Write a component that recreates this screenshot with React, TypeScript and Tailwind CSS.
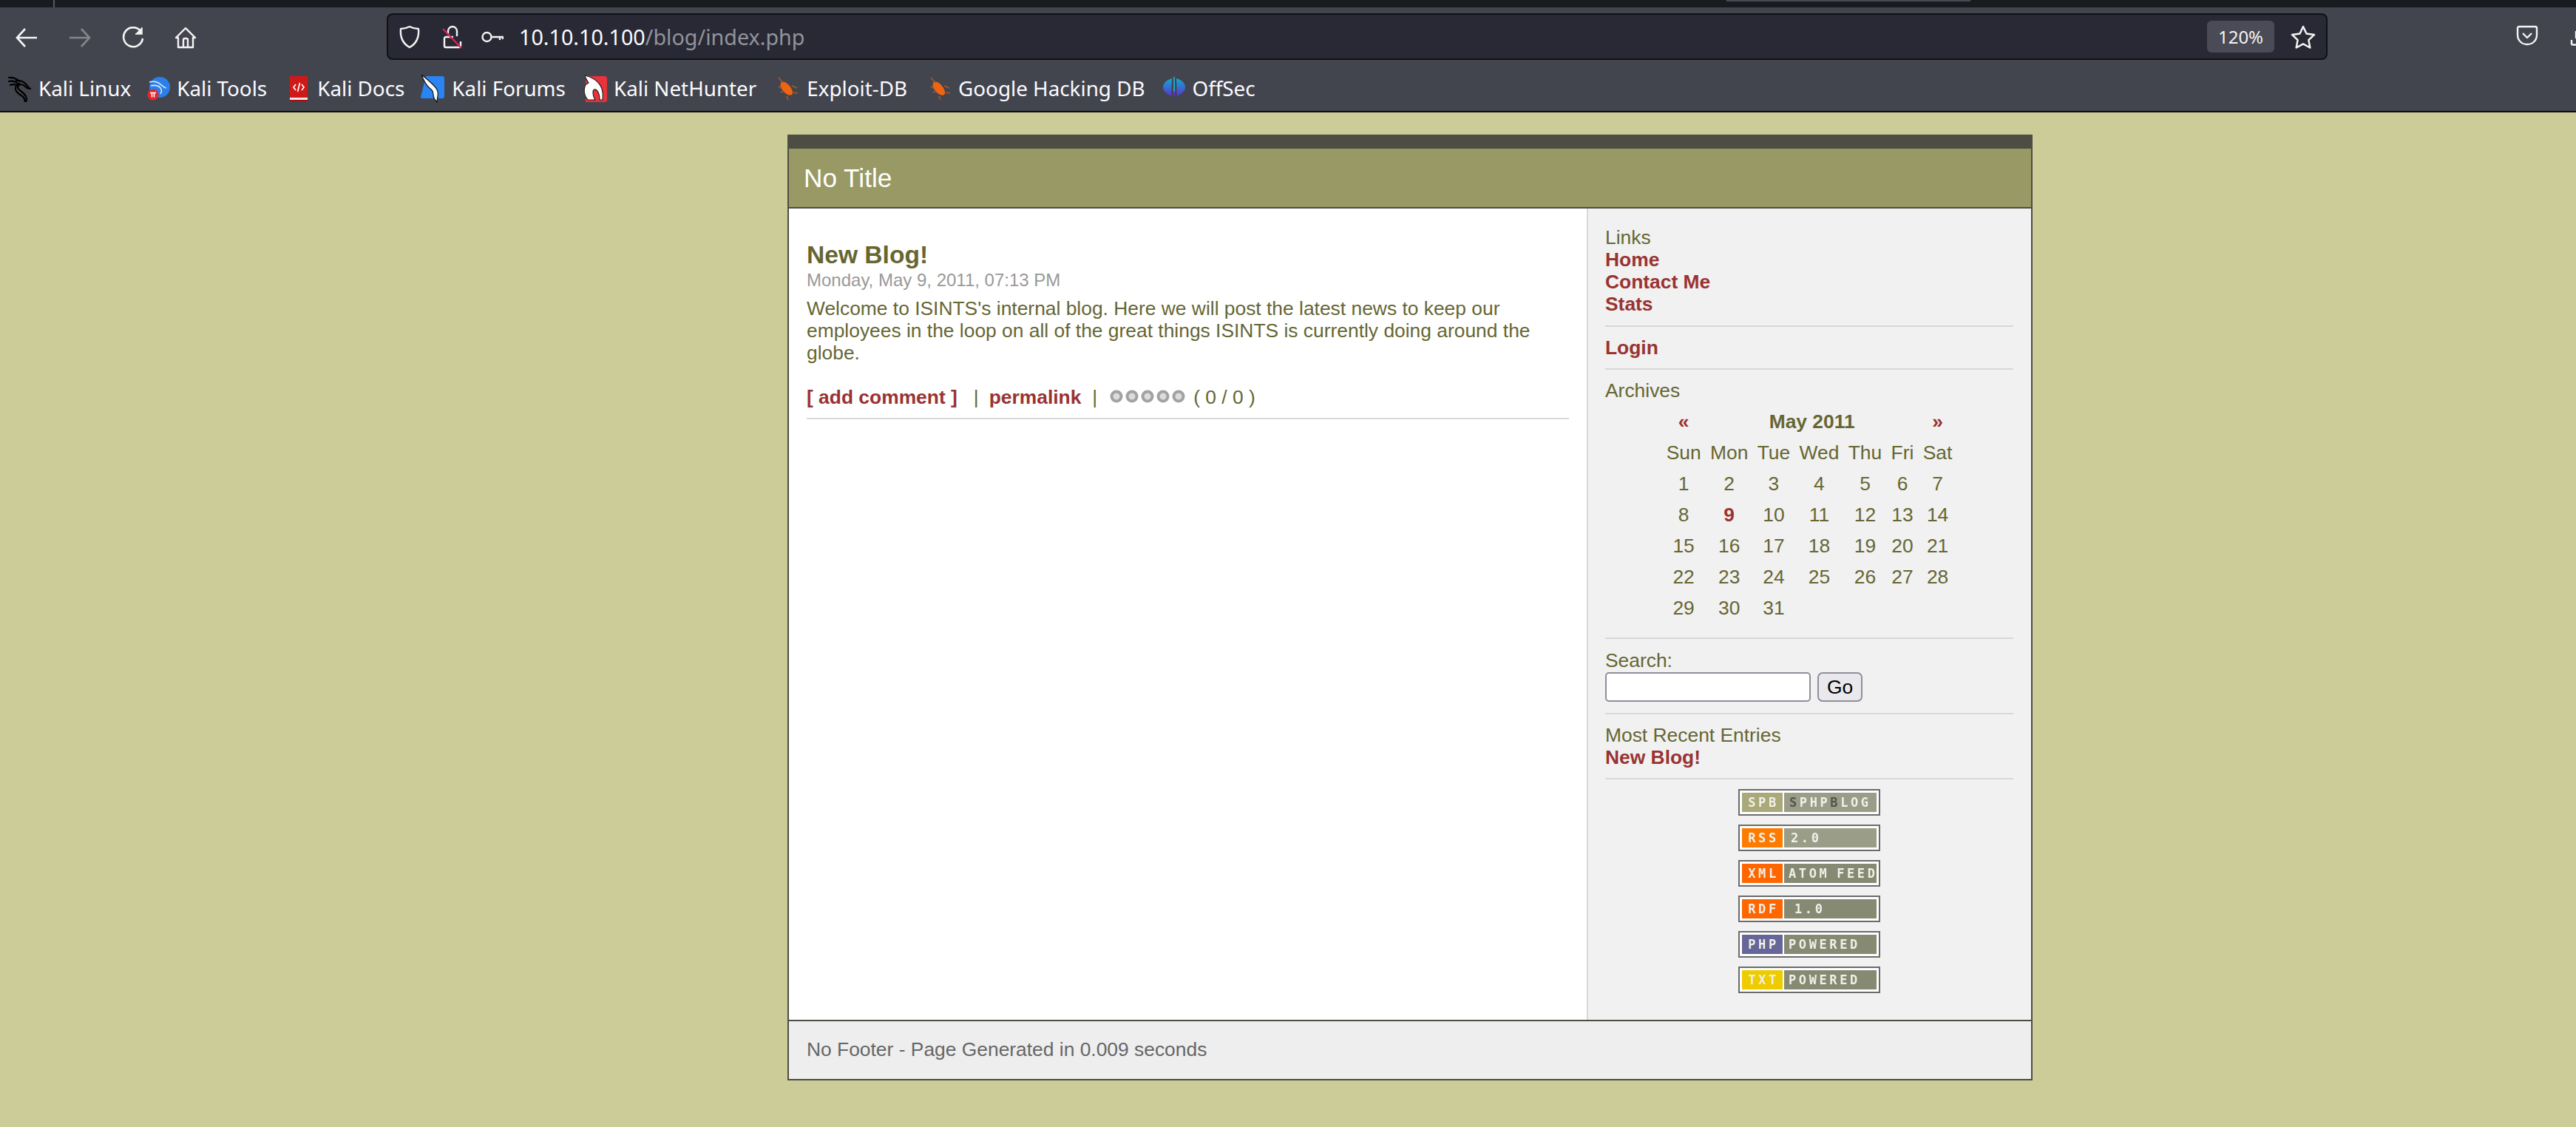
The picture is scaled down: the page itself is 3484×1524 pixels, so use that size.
import React from 'react';

const DAYS = ['Sun', 'Mon', 'Tue', 'Wed', 'Thu', 'Fri', 'Sat'];
const WEEKS = [
    ['1', '2', '3', '4', '5', '6', '7'],
    ['8', '9', '10', '11', '12', '13', '14'],
    ['15', '16', '17', '18', '19', '20', '21'],
    ['22', '23', '24', '25', '26', '27', '28'],
    ['29', '30', '31', '', '', '', ''],
];

const KaliDragon = ({ color = '#000' }: { color?: string }) => (
    <svg width="32" height="36" viewBox="0 0 32 36" fill="none" stroke={color} strokeWidth="2.2" strokeLinecap="round" strokeLinejoin="round">
        <path d="M1 3c6-1 10 1 14 5 M1 8c5-1 9 0 12 3 M3 13c3-1 6-1 8 0" />
        <path d="M11 7c6-1 11 2 14 6 2 2 3 4 5 5-3 0-5-1-7-3-3-3-7-4-9-1-2 2 0 5 3 7 4 3 8 6 8 11 0 2-1 4-2 6 0-4-1-8-4-10-4-3-9-5-9-10 0-3 2-6 5-7" />
    </svg>
);

const favicons: Record<string, React.ReactNode> = {
    linux: <KaliDragon />,
    tools: (
        <svg width="32" height="34" viewBox="0 0 32 34" fill="none">
            <circle cx="17" cy="15" r="14" fill="#2a7fea" />
            <path d="M3 8c6-2 12 0 15 3 3 2 5 5 8 5M5 13c4-1 8-1 11 1 3 2 5 6 2 10" stroke="#dbe9f7" strokeWidth="1.6" />
            <circle cx="8" cy="25" r="7.5" fill="#e8262a" />
            <path d="M4 22.5h8M6.5 22.5v6M9.5 22.5v6" stroke="#fff" strokeWidth="1.6" />
        </svg>
    ),
    docs: (
        <svg width="26" height="34" viewBox="0 0 26 34" fill="none">
            <rect x="1" y="0" width="24" height="29" fill="#d01818" />
            <rect x="1" y="29" width="24" height="3" fill="#e8e8e8" />
            <rect x="1" y="32" width="24" height="2" fill="#a01010" />
            <path d="M9 11l-3 4 3 4M17 11l3 4-3 4M14.5 9l-3 12" stroke="#fff" strokeWidth="1.7" />
        </svg>
    ),
    forums: (
        <svg width="34" height="38" viewBox="0 0 34 38" fill="none">
            <path d="M8 2h22a3 3 0 0 1 3 3v24a3 3 0 0 1-3 3H3a2 2 0 0 1-2-2z" fill="#2a84f2" />
            <path d="M2 0c5 4 10 8 14 12 4 4 7 6 8 11 1 5-1 9-1 14-3-3-5-6-5-10 0-4-1-6-4-8C9 15 5 8 2 0z" fill="#fff" stroke="#111" strokeWidth="1.2" />
        </svg>
    ),
    nethunter: (
        <svg width="32" height="36" viewBox="0 0 32 36" fill="none">
            <path d="M8 1h21a3 3 0 0 1 3 3v29a3 3 0 0 1-3 3H3V8z" fill="#e8323c" />
            <path d="M2 0c8 2 15 6 19 11 4 4 6 11 5 22h-4c0-6-1-10-4-13-2-2-5-1-5 2 0 4 1 8 3 11H6C2 29 0 22 2 15c1-3 3-4 5-5-2-3-4-6-5-10z" fill="#fff" stroke="#222" strokeWidth="1.2" />
        </svg>
    ),
    exploit: (
        <svg width="30" height="34" viewBox="0 0 30 34" fill="none">
            <path d="M7 8c4-2 9 2 13 8 2 4 3 7 1 9-3 2-7 0-11-4C6 17 4 11 7 8z" fill="#ee6410" />
            <path d="M3 2l6 7M21 13l7 3M23 22l6 1M3 14l4 2M6 22l4-2M14 27l2 5" stroke="#a8582c" strokeWidth="1.6" />
        </svg>
    ),
    offsec: (
        <svg width="30" height="32" viewBox="0 0 30 46" fill="none" preserveAspectRatio="none">
            <defs>
                <linearGradient id="offsecFill" x1="0" y1="0" x2="0" y2="1">
                    <stop offset="0" stopColor="#12a9d0" />
                    <stop offset="1" stopColor="#5a35cf" />
                </linearGradient>
            </defs>
            <path d="M12 3C4 6 0 14 0 20c0 7 5 13 11 17z" fill="url(#offsecFill)" />
            <path d="M18 3c8 3 12 11 12 17 0 7-5 13-11 17z" fill="url(#offsecFill)" />
            <path d="M15 0v30" stroke="#1aa7cc" strokeWidth="2" />
            <path d="M13 28h4l-2 14z" fill="#5a2fd0" />
        </svg>
    ),
};

const BOOKMARKS = [
    { icon: 'linux', label: 'Kali Linux', iconBox: 'w-[52px] pl-[11px]', mr: 'mr-[22px]' },
    { icon: 'tools', label: 'Kali Tools', iconBox: 'w-[40px]', mr: 'mr-[30px]' },
    { icon: 'docs', label: 'Kali Docs', iconBox: 'w-[38px]', mr: 'mr-[21px]' },
    { icon: 'forums', label: 'Kali Forums', iconBox: 'w-[43px]', mr: 'mr-[24px]' },
    { icon: 'nethunter', label: 'Kali NetHunter', iconBox: 'w-[41px]', mr: 'mr-[27px]' },
    { icon: 'exploit', label: 'Exploit-DB', iconBox: 'w-[41px]', mr: 'mr-[29px]' },
    { icon: 'exploit', label: 'Google Hacking DB', iconBox: 'w-[40px]', mr: 'mr-[24px]' },
    { icon: 'offsec', label: 'OffSec', iconBox: 'w-[40px]', mr: '' },
];

const BADGES = [
    { left: 'SPB', leftBg: 'bg-[#a9a97a]', right: 'PHPBLOG', rightBg: 'bg-[#9a9d88]', pad: 'pl-[7px]' },
    { left: 'RSS', leftBg: 'bg-[#ff7a00]', right: '2.0', rightBg: 'bg-[#9a9d88]', pad: 'pl-[9px]' },
    { left: 'XML', leftBg: 'bg-[#ff6600]', right: 'ATOM FEED', rightBg: 'bg-[#868a72]', pad: 'pl-[6px]' },
    { left: 'RDF', leftBg: 'bg-[#ff6600]', right: '1.0', rightBg: 'bg-[#868a72]', pad: 'pl-[14px]' },
    { left: 'PHP', leftBg: 'bg-[#666699]', right: 'POWERED', rightBg: 'bg-[#868a72]', pad: 'pl-[6px]' },
    { left: 'TXT', leftBg: 'bg-[#eecc00]', right: 'POWERED', rightBg: 'bg-[#868a72]', pad: 'pl-[6px]' },
];

const Badge = ({ left, leftBg, right, rightBg, pad }: (typeof BADGES)[number]) => (
    <div className="w-[192px] h-[36px] border-2 border-[#6b6b6b] bg-white p-[3px] flex gap-[2px] font-['DejaVu_Sans_Mono',monospace] font-bold text-[17px] leading-[26px] text-[#f0f0e8] blur-[0.3px]">
        <div className={`w-[55px] ${leftBg} text-center tracking-[3.6px] pl-[3px]`}>{left}</div>
        <div className={`w-[125px] ${rightBg} ${pad} tracking-[3.6px] [word-spacing:-4px] whitespace-pre`}>
            {left === 'SPB' ? (
                <>
                    <span className="text-[#55564a]">S</span>PHP<span className="text-[#55564a]">B</span>LOG
                </>
            ) : (
                right
            )}
        </div>
    </div>
);

const Divider = () => <div className="h-[2px] bg-[#d8d8d8]" />;

const LinkText = ({ children }: { children: React.ReactNode }) => <div className="font-bold text-[#993333]">{children}</div>;

export default function App() {
    return (
        <div className="min-h-[1524px] bg-[#cccc99] font-['Liberation_Sans',Arial,sans-serif] overflow-hidden">
            {/* browser chrome */}
            <div className="relative h-[10px] bg-[#1a1b20] overflow-hidden">
                <div className="absolute left-[72px] top-0 w-[2px] h-[10px] bg-[#56575c]" />
                <div className="absolute left-[2335px] top-0 w-[330px] h-[2px] bg-[#4a4b52]" />
            </div>
            <div className="bg-[#43454e] border-b-2 border-[#0c0c0f] font-['Noto_Sans',sans-serif]">
                <div className="h-[75px] flex items-start">
                    <div className="flex h-[75px] items-center pt-[7px]">
                        <div className="w-[72px] flex justify-center">
                            <svg width="30" height="26" viewBox="0 0 30 26" fill="none" stroke="#f4f4f5" strokeWidth="2.6">
                                <path d="M29 13H3M13 1L2 13l11 12" />
                            </svg>
                        </div>
                        <div className="w-[72px] flex justify-center">
                            <svg width="30" height="26" viewBox="0 0 30 26" fill="none" stroke="#85868c" strokeWidth="2.6">
                                <path d="M1 13h26M17 1l11 12-11 12" />
                            </svg>
                        </div>
                        <div className="w-[72px] flex justify-center">
                            <svg width="30" height="30" viewBox="0 0 30 30" fill="none" stroke="#f4f4f5" strokeWidth="2.6">
                                <path d="M26 7a13 13 0 1 0 2 9" />
                                <path d="M27 1v9h-9" fill="#f4f4f5" strokeWidth="1.5" />
                            </svg>
                        </div>
                        <div className="w-[70px] flex justify-center">
                            <svg width="30" height="30" viewBox="0 0 30 30" fill="none" stroke="#f4f4f5" strokeWidth="2.4" strokeLinejoin="round">
                                <path d="M15 2L2 15h3v13h20V15h3z" />
                                <path d="M12 28V18a2 2 0 0 1 2-2h2a2 2 0 0 1 2 2v10" />
                            </svg>
                        </div>
                    </div>
                    <div className="ml-[237px] mt-[8px] w-[2625px] h-[63px] flex items-center rounded-[8px] border-2 border-[#101116] bg-[#282934]">
                        <div className="w-[58px] flex justify-center">
                            <svg width="30" height="32" viewBox="0 0 30 32" fill="none" stroke="#f4f4f5" strokeWidth="2.4" strokeLinejoin="round">
                                <path d="M15 2c4 2 8 3 12 3 1 11-3 20-12 25C6 25 2 16 3 5c4 0 8-1 12-3z" />
                            </svg>
                        </div>
                        <div className="w-[58px] flex justify-center">
                            <svg width="28" height="32" viewBox="0 0 28 32" fill="none" strokeWidth="2.4">
                                <path d="M8 13V8a6 6 0 0 1 12 0v7" stroke="#f4f4f5" />
                                <path d="M15 16H5a2 2 0 0 0-2 2v10a2 2 0 0 0 2 2h18a2 2 0 0 0 2-2v-6" stroke="#f4f4f5" />
                                <path d="M1 5l25 26" stroke="#e0224f" />
                            </svg>
                        </div>
                        <div className="w-[50px] flex justify-center">
                            <svg width="30" height="16" viewBox="0 0 30 16" fill="none" stroke="#f4f4f5" strokeWidth="2.4">
                                <circle cx="7.500" cy="8" r="6" />
                                <path d="M14 8h16M25 8v4M29 7v4" />
                            </svg>
                        </div>
                        <div className="ml-[11px] text-[28.7px] leading-[40px] text-[#fbfbfe] whitespace-nowrap">
                            10.10.10.100<span className="text-[#92939b]">/blog/index.php</span>
                        </div>
                        <div className="ml-auto mr-[8px] w-[91px] h-[43px] rounded-[6px] bg-[#4a4b56] flex items-center justify-center text-[24px] text-[#f4f4f5]">120%</div>
                        <div className="w-[62px] flex justify-center">
                            <svg width="34" height="32" viewBox="0 0 34 32" fill="none" stroke="#f4f4f5" strokeWidth="2.5" strokeLinejoin="round">
                                <path d="M17 2l4.500 9.500 10.500 1.400-7.600 7.200 1.900 10.400L17 25.400l-9.300 5.100 1.900-10.400L2 12.900l10.500-1.400z" />
                            </svg>
                        </div>
                    </div>
                    <div className="ml-auto flex h-[75px] items-center">
                        <div className="w-[72px] flex justify-center">
                            <svg width="30" height="28" viewBox="0 0 30 28" fill="none" stroke="#f4f4f5" strokeWidth="2.4" strokeLinejoin="round">
                                <path d="M4 2h22a2 2 0 0 1 2 2v9c0 8-6 13-13 13S2 21 2 13V4a2 2 0 0 1 2-2z" />
                                <path d="M9 11l6 6 6-6" />
                            </svg>
                        </div>
                        <div className="w-[30px] overflow-hidden">
                            <svg width="30" height="28" viewBox="0 0 30 28" fill="none" stroke="#f4f4f5" strokeWidth="2.4">
                                <path d="M24 20v5a1.500 1.500 0 0 0 1.500 1.500H30M30 8v10" />
                            </svg>
                        </div>
                    </div>
                </div>
                <div className="h-[65px] flex items-center text-[#fbfbfe] text-[27.8px] pt-[4px]">
                    {BOOKMARKS.map((b) => (
                        <div key={b.label} className={`flex items-center ${b.mr}`}>
                            <div className={`${b.iconBox} flex items-center shrink-0`}>{favicons[b.icon]}</div>
                            <span className="whitespace-nowrap">{b.label}</span>
                        </div>
                    ))}
                </div>
            </div>

            {/* blog page */}
            <div className="pt-[30px] pl-[1065px]">
                <div className="w-[1684px] border-2 border-t-[19px] border-[#4d4d44] text-[26.4px] leading-[30px] text-[#666633]">
                    <div className="h-[81px] border-b-2 border-[#4d4d44] bg-[#999966] pl-[20px] text-[35.2px] leading-[79px] text-white">No Title</div>
                    <div className="flex">
                        <div className="w-[1079px] bg-white px-[24px] pt-[44px]">
                            <h3 className="text-[33.6px] leading-[38px] font-bold">New Blog!</h3>
                            <div className="text-[24px] text-[#999999]">Monday, May 9, 2011, 07:13 PM</div>
                            <p className="mt-[8px]">Welcome to ISINTS's internal blog. Here we will post the latest news to keep our employees in the loop on all of the great things ISINTS is currently doing around the globe.</p>
                            <div className="mt-[30px] pb-[13px] border-b-2 border-[#d8d8d8] flex items-start whitespace-pre">
                                <span className="font-bold text-[#993333]">[ add comment ]</span>
                                <span className="ml-[22px]">|</span>
                                <span className="ml-[14px] font-bold text-[#993333]">permalink</span>
                                <span className="ml-[15px]">|</span>
                                <svg className="ml-[17px] mt-[5px]" width="103" height="18" viewBox="0 0 103 18" fill="#dcdcdc" stroke="#a2a2a2" strokeWidth="4">
                                    <circle cx="9" cy="9" r="6.500" />
                                    <circle cx="30" cy="9" r="6.500" />
                                    <circle cx="51" cy="9" r="6.500" />
                                    <circle cx="72" cy="9" r="6.500" />
                                    <circle cx="93" cy="9" r="6.500" />
                                </svg>
                                <span className="ml-[10px]">( 0 / 0 )</span>
                            </div>
                        </div>
                        <div className="flex-1 border-l-2 border-[#d8d8d8] bg-[#f1f1f1] pl-[23px] pr-[24px] pt-[24px] pb-[36px]">
                            <div>Links</div>
                            <LinkText>Home</LinkText>
                            <LinkText>Contact Me</LinkText>
                            <LinkText>Stats</LinkText>
                            <div className="mt-[14px]"><Divider /></div>
                            <div className="mt-[13px]"><LinkText>Login</LinkText></div>
                            <div className="mt-[13px]"><Divider /></div>
                            <div className="mt-[13px]">Archives</div>
                            <table className="mx-auto mt-[6px] border-collapse">
                                <tbody>
                                    <tr className="h-[42px] text-center">
                                        <td className="px-[6.2px] font-bold text-[#993333]">«</td>
                                        <td colSpan={5} className="px-[6.2px] font-bold">May 2011</td>
                                        <td className="px-[6.2px] font-bold text-[#993333]">»</td>
                                    </tr>
                                    <tr className="h-[42px] text-center">
                                        {DAYS.map((d) => (
                                            <td key={d} className="px-[6.2px]">{d}</td>
                                        ))}
                                    </tr>
                                    {WEEKS.map((week, i) => (
                                        <tr key={i} className="h-[42px] text-center">
                                            {week.map((d, j) => (
                                                <td key={j} className={`px-[6.2px] ${d === '9' ? 'font-bold text-[#993333]' : ''}`}>{d}</td>
                                            ))}
                                        </tr>
                                    ))}
                                </tbody>
                            </table>
                            <div className="mt-[19px]"><Divider /></div>
                            <div className="mt-[14px]">Search:</div>
                            <div className="mt-[1px] flex gap-[9px]">
                                <div className="w-[278px] h-[40px] rounded-[5px] border-2 border-[#8f8f9d] bg-white" />
                                <button className="w-[61px] h-[40px] rounded-[7px] border-2 border-[#8f8f9d] bg-[#e9e9ed] text-black text-[26.4px] leading-[30px]">Go</button>
                            </div>
                            <div className="mt-[15px]"><Divider /></div>
                            <div className="mt-[13px]">Most Recent Entries</div>
                            <LinkText>New Blog!</LinkText>
                            <div className="mt-[13px]"><Divider /></div>
                            <div className="mt-[13px] flex flex-col items-center gap-[12px]">
                                {BADGES.map((b) => (
                                    <Badge key={b.left} {...b} />
                                ))}
                            </div>
                        </div>
                    </div>
                    <div className="h-[80px] border-t-2 border-[#4d4d44] bg-[#eeeeee] pl-[24px] pt-[23px] text-[#666666]">No Footer - Page Generated in 0.009 seconds</div>
                </div>
            </div>
        </div>
    );
}
